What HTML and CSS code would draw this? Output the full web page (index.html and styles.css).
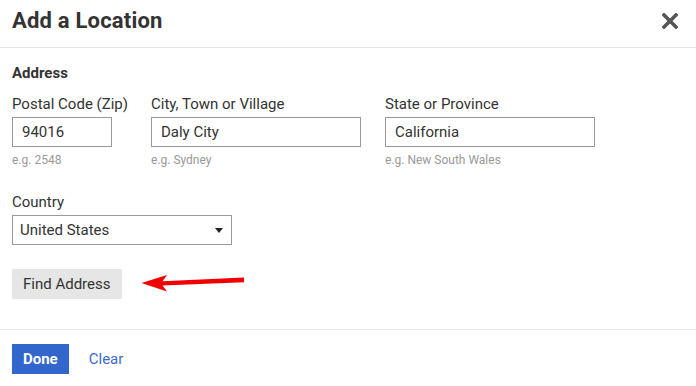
FILE: index.html
```html
<!DOCTYPE html>
<html lang="en">
<head>
  <meta charset="UTF-8" />
  <meta name="viewport" content="width=device-width, initial-scale=1.0" />
  <title>Add a Location</title>
  <link rel="stylesheet" href="styles.css">
</head>
<body>
  <div class="dialog">
    <div class="dialog-header">
      <h1 class="dialog-title">Add a Location</h1>
      <button class="close-btn" aria-label="Close">
        <svg width="16" height="16" viewBox="0 0 16 16">
          <path d="M2 2 L14 14 M14 2 L2 14" stroke="#555" stroke-width="3.6" stroke-linecap="square" fill="none"/>
        </svg>
      </button>
    </div>

    <div class="dialog-body">
      <div class="section-title">Address</div>

      <div class="field-row">
        <div class="field">
          <label class="field-label">Postal Code (Zip)</label>
          <input class="text-input zip" type="text" value="94016" />
          <div class="hint">e.g. 2548</div>
        </div>
        <div class="field">
          <label class="field-label">City, Town or Village</label>
          <input class="text-input wide" type="text" value="Daly City" />
          <div class="hint">e.g. Sydney</div>
        </div>
        <div class="field">
          <label class="field-label">State or Province</label>
          <input class="text-input wide" type="text" value="California" />
          <div class="hint">e.g. New South Wales</div>
        </div>
      </div>

      <div class="field country">
        <label class="field-label">Country</label>
        <div class="select-wrap">
          <select class="select-input">
            <option>United States</option>
          </select>
          <span class="caret"></span>
        </div>
      </div>

      <div class="find-row">
        <button class="find-btn">Find Address</button>
        <svg class="arrow" width="104" height="20" viewBox="0 0 104 20">
          <path d="M0.5 10 L26 2 L21.5 8.2 L103 4.6 L103 9.2 L21.5 12.4 L26 18.5 Z" fill="#f00000"/>
        </svg>
      </div>
    </div>

    <div class="dialog-footer">
      <button class="done-btn">Done</button>
      <a class="clear-link" href="#">Clear</a>
    </div>
  </div>
</body>
</html>
```

FILE: styles.css
```css
body {
  margin: 0;
  background: #fff;
  color: #333;
  font-family: Roboto, 'Liberation Sans', sans-serif;
}

.dialog {
  width: 696px;
  height: 386px;
  background: #fff;
}

.dialog-header {
  display: flex;
  justify-content: space-between;
  align-items: flex-start;
  padding: 9px 18px 14px 12px;
  border-bottom: 1px solid #e6e6e6;
}

.dialog-title {
  margin: 0;
  font-size: 22px;
  line-height: 24px;
  font-weight: 700;
  letter-spacing: 0.2px;
  color: #333;
}

.close-btn {
  background: none;
  border: none;
  padding: 0;
  margin-top: 4px;
  width: 16px;
  height: 16px;
  cursor: pointer;
}

.close-btn svg {
  display: block;
}

.dialog-body {
  padding: 16px 12px 30px;
}

.section-title {
  font-size: 15px;
  line-height: 18px;
  font-weight: 700;
  color: #333;
  margin-bottom: 13px;
}

.field-row {
  display: flex;
  gap: 23px;
}

.field {
  display: flex;
  flex-direction: column;
  align-items: flex-start;
}

.field-row .field + .field + .field {
  margin-left: 1px;
}

.field-label {
  font-size: 15px;
  line-height: 18px;
  color: #333;
  margin-bottom: 4px;
}

.text-input {
  box-sizing: border-box;
  height: 30px;
  border: 1px solid #999;
  border-radius: 0;
  padding: 0 9px;
  font-family: inherit;
  font-size: 15px;
  color: #333;
  outline: none;
}

.zip {
  width: 100px;
}

.wide {
  width: 210px;
}

.hint {
  font-size: 12px;
  line-height: 14px;
  color: #999;
  margin-top: 6px;
}

.country {
  margin-top: 26px;
}

.country .field-label {
  margin-bottom: 4px;
}

.select-wrap {
  position: relative;
}

.select-input {
  -webkit-appearance: none;
  appearance: none;
  box-sizing: border-box;
  width: 220px;
  height: 30px;
  border: 1px solid #999;
  border-radius: 0;
  background: #fff;
  padding: 0 7px;
  font-family: inherit;
  font-size: 15px;
  color: #333;
  outline: none;
}

.caret {
  position: absolute;
  right: 9px;
  top: 13px;
  width: 0;
  height: 0;
  border-left: 4px solid transparent;
  border-right: 4px solid transparent;
  border-top: 5px solid #222;
}

.find-row {
  display: flex;
  align-items: center;
  gap: 19px;
  margin-top: 24px;
}

.find-btn {
  height: 30px;
  padding: 0 11px;
  border: none;
  border-radius: 0;
  background: #e6e6e6;
  font-family: inherit;
  font-size: 15px;
  color: #333;
  cursor: pointer;
}

.arrow {
  display: block;
  margin-top: -3px;
}

.dialog-footer {
  display: flex;
  align-items: center;
  gap: 20px;
  padding: 14px 12px;
  border-top: 1px solid #e6e6e6;
}

.done-btn {
  height: 30px;
  padding: 0 11px;
  border: none;
  border-radius: 0;
  background: #3366cc;
  color: #fff;
  font-family: inherit;
  font-size: 15px;
  font-weight: 700;
  cursor: pointer;
}

.clear-link {
  font-size: 15px;
  color: #3a6ccf;
  text-decoration: none;
}
```
